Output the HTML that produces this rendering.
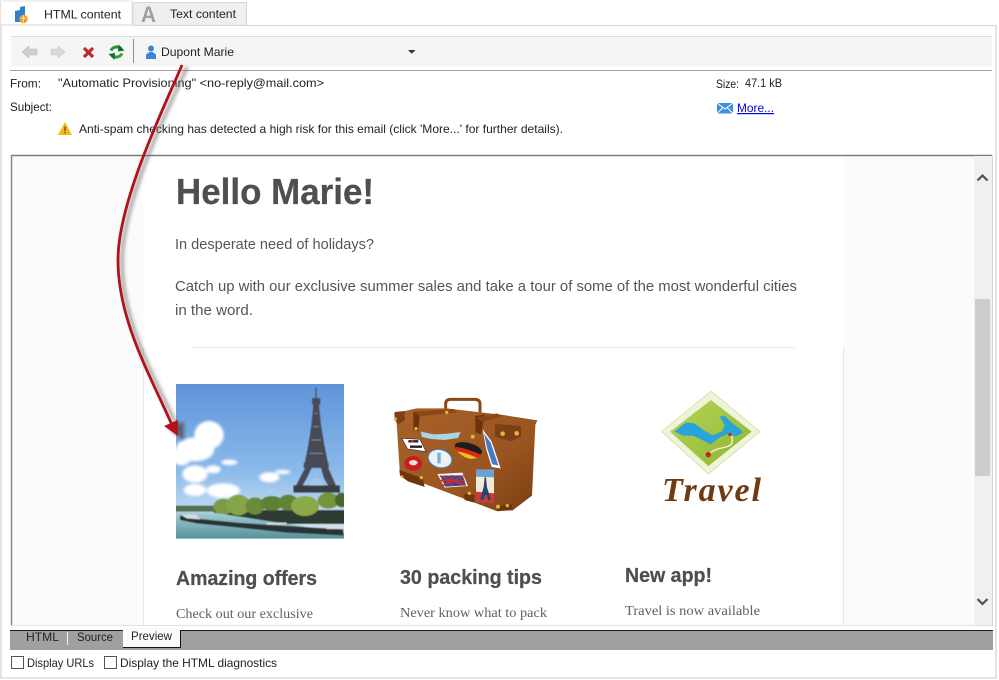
<!DOCTYPE html>
<html><head><meta charset="utf-8"><title>Email preview</title>
<style>
html,body{margin:0;padding:0;background:#fff;width:999px;height:680px;overflow:hidden}
svg{display:block}
text{font-family:"Liberation Sans",sans-serif;font-size:12px;fill:#222}
.b{font-weight:bold;fill:#4f4f4f;stroke:#4f4f4f;stroke-width:.25px}
.p{font-size:15px;fill:#555}
.s{font-family:"Liberation Serif",serif;font-size:14px;fill:#5f5f5f}
</style></head><body>
<svg width="999" height="680" viewBox="0 0 999 680" xmlns="http://www.w3.org/2000/svg">
<defs>
<filter id="sh" x="-50%" y="-10%" width="200%" height="120%"><feGaussianBlur stdDeviation="1.800"/></filter>
<filter id="soft" x="-5%" y="-5%" width="110%" height="110%"><feGaussianBlur stdDeviation="1.300"/></filter>
<filter id="soft2" x="-5%" y="-5%" width="110%" height="110%"><feGaussianBlur stdDeviation=".9"/></filter>
<filter id="bl2" x="-20%" y="-20%" width="140%" height="140%"><feGaussianBlur stdDeviation="4"/></filter>
<linearGradient id="sky" x1="0" y1="0" x2="0" y2="1"><stop offset="0" stop-color="#5e93d9"/><stop offset=".55" stop-color="#8ab9ea"/><stop offset=".85" stop-color="#c8dff2"/><stop offset="1" stop-color="#d8e8f2"/></linearGradient>
<linearGradient id="wat" x1="0" y1="0" x2="0" y2="1"><stop offset="0" stop-color="#a5ccd4"/><stop offset="1" stop-color="#4c8c92"/></linearGradient>
<linearGradient id="case" x1="0" y1="0" x2="1" y2="1"><stop offset="0" stop-color="#a9622a"/><stop offset=".6" stop-color="#9a5520"/><stop offset="1" stop-color="#7c3f14"/></linearGradient>
<linearGradient id="gr" x1="0" y1="0" x2="1" y2="1"><stop offset="0" stop-color="#b8d45a"/><stop offset="1" stop-color="#8db52e"/></linearGradient>
<clipPath id="ph"><rect x="108" y="42" width="504" height="464"/></clipPath>
</defs>

<!-- frame -->
<rect width="999" height="680" fill="#fff"/>
<path d="M1 25V678H996V25" fill="none" stroke="#dcdcdc" stroke-width="1.500"/>
<path d="M1 25H132M246 25.500H996" stroke="#d6d6d6" fill="none"/>
<path d="M.5 25V1H132V25" fill="none" stroke="#e4e4e4"/>
<rect x="133" y="2.500" width="113.500" height="23" fill="#efefef" stroke="#d6d6d6"/>

<!-- tab icons -->
<path d="M15 11l5-1V7l5-1v10H15z" fill="#2f7fc9"/><rect x="15" y="13" width="7" height="9" fill="#2f7fc9"/>
<circle cx="23.500" cy="19" r="4.200" fill="#ef9d26"/><path d="M21 18h5M23.500 15.500v7" stroke="#fbe0a8"/>
<text x="44" y="18.500" textLength="77" lengthAdjust="spacingAndGlyphs">HTML content</text>
<text x="141" y="22" style="font-size:22px;font-weight:bold;fill:#a0a0a0" textLength="15" lengthAdjust="spacingAndGlyphs">A</text>
<text x="170" y="18" textLength="66" lengthAdjust="spacingAndGlyphs">Text content</text>

<!-- toolbar -->
<rect x="11" y="37" width="981" height="29" fill="#f5f5f5"/>
<path d="M11 36.500H992" stroke="#dedede"/>
<path d="M10 70.500H992" stroke="#a3a3a3"/>
<path d="M133.500 39V63" stroke="#8d8d8d"/>
<path d="M22 52l7-6v3h8v6h-8v3z" fill="#cfcfcf" stroke="#bdbdbd" stroke-width=".6"/>
<path d="M65 52l-7-6v3h-7v6h7v3z" fill="#dadada" stroke="#c8c8c8" stroke-width=".6"/>
<path d="M84 48l9 9M93 48l-9 9" stroke="#c0282d" stroke-width="3.200"/>
<path d="M111 50.500a6.500 6.500 0 0 1 10-2" fill="none" stroke="#1f9a3a" stroke-width="3"/><path d="M118.500 44.500l6 6-6.500 1z" fill="#14702a"/>
<path d="M122 53.500a6.500 6.500 0 0 1-10 2" fill="none" stroke="#2ea043" stroke-width="3"/><path d="M114.500 60l-6-6 6.500-1z" fill="#14702a"/>
<circle cx="151" cy="48.500" r="3" fill="#3b86d0"/><path d="M149.500 52h3l3.500 2.500V59h-10v-4.500z" fill="#3b86d0"/>
<text x="161" y="56" textLength="73" lengthAdjust="spacingAndGlyphs">Dupont Marie</text>
<path d="M408 50h7.500l-3.750 3.800z" fill="#333"/>

<!-- headers -->
<text x="10" y="87.500" textLength="31" lengthAdjust="spacingAndGlyphs">From:</text>
<text x="58" y="87" textLength="266" lengthAdjust="spacingAndGlyphs">"Automatic Provisioning" &lt;no-reply@mail.com&gt;</text>
<text x="10" y="111" textLength="42" lengthAdjust="spacingAndGlyphs">Subject:</text>
<path d="M65 122l7 13H58z" fill="#f6b915"/><path d="M65 126.500v4.500M65 132v1.500" stroke="#5b4a10" stroke-width="1.300"/>
<text x="79" y="133" textLength="484" lengthAdjust="spacingAndGlyphs">Anti-spam checking has detected a high risk for this email (click 'More...' for further details).</text>
<text x="716" y="88" textLength="23" lengthAdjust="spacingAndGlyphs">Size:</text>
<text x="745" y="87" textLength="37" lengthAdjust="spacingAndGlyphs">47.1 kB</text>
<rect x="717" y="103" width="16" height="10.500" fill="#3d8fe0"/><path d="M717 103l8 6 8-6M717 113.500l6-6M733 113.500l-6-6" stroke="#fff" fill="none"/>
<text x="737" y="112" style="fill:#0000ee;text-decoration:underline" textLength="37" lengthAdjust="spacingAndGlyphs">More...</text>

<!-- preview pane -->
<rect x="11" y="155" width="981" height="470" fill="#fbfbfb"/>
<rect x="143" y="156" width="700" height="469" fill="#fff"/>
<path d="M11 155.500H992" stroke="#7d7d7d" stroke-width="1.600"/>
<path d="M11.500 155V625" stroke="#8a8a8a" stroke-width="1.500"/>
<path d="M192 347.500H795" stroke="#e8e8e8"/>
<path d="M143.500 348V625M843.500 348V625" stroke="#e6e6e6"/>
<path d="M11 625.500H993" stroke="#e2e2e2"/>
<!-- scrollbar -->
<rect x="974" y="156" width="18" height="469" fill="#f0f0f0"/>
<rect x="975" y="299" width="15" height="177" fill="#cdcdcd"/>
<path d="M977.500 180.500l5-5 5 5" fill="none" stroke="#505050" stroke-width="2.200"/>
<path d="M977.500 599l5 5 5-5" fill="none" stroke="#505050" stroke-width="2.200"/>
<path d="M992.500 155V625" stroke="#d8d8d8"/>

<!-- email text -->
<text class="b" x="176" y="204" style="font-size:36px" textLength="198" lengthAdjust="spacingAndGlyphs">Hello Marie!</text>
<text class="p" x="175" y="249" textLength="199" lengthAdjust="spacingAndGlyphs">In desperate need of holidays?</text>
<text class="p" x="175" y="291" textLength="622" lengthAdjust="spacingAndGlyphs">Catch up with our exclusive summer sales and take a tour of some of the most wonderful cities</text>
<text class="p" x="175" y="315" textLength="78" lengthAdjust="spacingAndGlyphs">in the word.</text>

<!-- eiffel photo -->
<g transform="translate(140 370) scale(.33333)"><g clip-path="url(#ph)"><g filter="url(#soft)">
<rect x="100" y="35" width="520" height="480" fill="url(#sky)"/>
<g fill="#fff" filter="url(#bl2)">
<ellipse cx="207" cy="195" rx="44" ry="42"/><ellipse cx="165" cy="238" rx="58" ry="36"/><ellipse cx="125" cy="258" rx="30" ry="28"/>
<ellipse cx="165" cy="312" rx="38" ry="26"/><ellipse cx="220" cy="298" rx="22" ry="12"/>
<ellipse cx="165" cy="360" rx="34" ry="18"/><ellipse cx="250" cy="362" rx="50" ry="22"/>
<ellipse cx="388" cy="322" rx="30" ry="15"/><ellipse cx="428" cy="306" rx="24" ry="6"/><ellipse cx="268" cy="277" rx="24" ry="8"/>
</g>
<!-- tower -->
<g fill="#474a55">
<rect x="526" y="52" width="4" height="32"/>
<rect x="516" y="84" width="25" height="20"/>
<path d="M520 104h17l6 60 10 60 12 60h-72l12-60 9-60z"/>
<rect x="491" y="278" width="75" height="16"/>
<path d="M495 294h20l-14 30-14 24h-20zM543 294h22l24 54h-24l-14-24z"/>
<rect x="460" y="346" width="140" height="22" fill="#3b3d44"/>
</g>
<path d="M524 130h9M520 170h17M514 210h29M508 250h41" stroke="#7f8fa8" stroke-width="3"/>
<path d="M510 346q19-46 38 0z" fill="#a6c8ea"/>
<!-- trees -->
<rect x="100" y="407" width="125" height="18" fill="#566f4d"/>
<rect x="222" y="420" width="395" height="42" fill="#2f3a33"/>
<g>
<ellipse cx="250" cy="410" rx="30" ry="24" fill="#7d9b45"/><ellipse cx="295" cy="405" rx="36" ry="31" fill="#86a548"/><ellipse cx="345" cy="408" rx="28" ry="26" fill="#6a8a3c"/><ellipse cx="395" cy="400" rx="34" ry="22" fill="#5d8236"/><ellipse cx="445" cy="398" rx="30" ry="24" fill="#5f8538"/><ellipse cx="495" cy="408" rx="42" ry="30" fill="#8aa948"/><ellipse cx="565" cy="392" rx="32" ry="24" fill="#75953e"/><ellipse cx="605" cy="390" rx="20" ry="22" fill="#46692e"/>
</g>
<!-- water -->
<path d="M100 428H222L620 490V515H100z" fill="url(#wat)"/>
<path d="M120 436l50 10 120 12 150 10 170 10v18l-170-8-150-16-120-12-50-10z" fill="#2c3336"/>
<path d="M122 434l45 0 15 14-42-3zM380 458h60v6h-60zM560 465h30v12h-30z" fill="#d8dde0"/>
</g></g></g>

<!-- suitcase -->
<g transform="translate(380 380) scale(.33333)"><g filter="url(#soft2)">
<path d="M197 105V72q0-14 15-14h72q16 0 16 14v38" fill="none" stroke="#8c4a18" stroke-width="9"/>
<path d="M42 100l68-15 90 0 170 20 102 16-6 14-10 212-58 44-48 2L60 284 50 130z" fill="url(#case)"/>
<path d="M345 132l78 6v32l-30 14-48-14zM44 96l30-3 0 28-20 12-10-14z" fill="#7c3f14"/>
<path d="M100 98l20-2-5 58-15-4zM285 108l30-5-12 60-16-5z" fill="#6e3610"/>
<path d="M100 95l120-8 12 10-112 12zM290 112l60-12 18 8-60 18z" fill="#8b4717"/>
<path d="M58 270l70 25 6 26-50-17-24-18zM252 340l32 6-2 22-28-8zM350 378l46-4 0 14-44 6z" fill="#6e3610"/>
<g fill="#e3b33b"><circle cx="368" cy="161" r="7"/><circle cx="410" cy="160" r="7"/><circle cx="278" cy="170" r="6"/><circle cx="46" cy="117" r="5"/><circle cx="108" cy="146" r="5"/><circle cx="124" cy="293" r="5"/><circle cx="268" cy="340" r="5"/><circle cx="354" cy="380" r="6"/><circle cx="382" cy="377" r="5"/><circle cx="200" cy="97" r="5"/><circle cx="66" cy="290" r="4"/></g>
<!-- stickers -->
<path d="M122 155l40 8 40-2 40-5-8 18-40 6-40-3-28-6z" fill="#a9d5e2"/>
<path d="M65 175l55 3 18 37-55-8z" fill="#fff" stroke="#333" stroke-width="2"/>
<path d="M85 184h30M90 200h36" stroke="#222" stroke-width="7"/><circle cx="97" cy="184" r="4" fill="#c8282d"/>
<ellipse cx="180" cy="236" rx="36" ry="27" transform="rotate(15 180 236)" fill="#eaf2f4" stroke="#3f82bd" stroke-width="3"/><path d="M172 218h10v32h-10z" fill="#7aaed2"/>
<ellipse cx="100" cy="250" rx="26" ry="22" fill="#c81e22"/><ellipse cx="100" cy="248" rx="13" ry="8" fill="#f3dcd0"/>
<ellipse cx="265" cy="207" rx="42" ry="18" transform="rotate(15 265 207)" fill="#1e1e1e"/>
<path d="M225 200q35 5 78 24l-10 9q-30-5-62-20z" fill="#d8281e"/><path d="M232 214q30 5 60 20l-18 3q-25-4-42-23z" fill="#edc020"/>
<path d="M172 282l75-4 17 40-70 5z" fill="#f4f4f4"/><path d="M180 287l68-1 10 30-62 4z" fill="#2a4d96"/><path d="M180 288l75 28M250 288l-65 30M215 285v34M182 302h72" stroke="#d8282e" stroke-width="5"/>
<path d="M308 148l27 37 27 80-27-4-17-56z" fill="#fff"/><path d="M312 160l20 28 23 68-18-3-16-50z" fill="#4779c9"/>
<path d="M288 268l54 4v97l-54-4z" fill="#f0ead8"/><path d="M288 335l54 5v30l-54-5z" fill="#c83a3a"/><path d="M288 268h54v24l-54-2z" fill="#6aa2cf"/><path d="M314 292l4 0 3 30 12 38h-8l-5-15h-5l-6 15h-8l10-40z" fill="#29436e"/>
</g></g>

<!-- travel logo -->
<g transform="translate(640 380) scale(.33333)">
<path d="M213 33L360 155 205 282 65 155z" fill="#eef4d8" stroke="#c9dc96" stroke-width="2"/>
<path d="M213 60L335 155 205 258 90 155z" fill="url(#gr)"/>
<path d="M103 155l35-28 25 3 30 22 25 14 28-12 8-20-15-24 15-3 20 20 28 22 8 8-22 12-22-8-25 10-30 22-22-12-30-14-30 0z" fill="#2aa3db"/>
<path d="M205 222q20-15 40-18t30-12q5-20-5-28" fill="none" stroke="#f4f7df" stroke-width="4"/>
<circle cx="205" cy="224" r="8" fill="#c81e28"/><circle cx="270" cy="164" r="5" fill="#c81e28"/>
</g>
<text x="662" y="501" style="font-family:'Liberation Serif',serif;font-style:italic;font-weight:bold;font-size:34px;fill:#6f3a12" textLength="99" lengthAdjust="spacing">Travel</text>

<!-- columns -->
<text class="b" x="176" y="585" style="font-size:20px" textLength="141" lengthAdjust="spacingAndGlyphs">Amazing offers</text>
<text class="b" x="400" y="584" style="font-size:20px" textLength="142" lengthAdjust="spacingAndGlyphs">30 packing tips</text>
<text class="b" x="625" y="582" style="font-size:20px" textLength="87" lengthAdjust="spacingAndGlyphs">New app!</text>
<text class="s" x="176" y="618" textLength="137" lengthAdjust="spacingAndGlyphs">Check out our exclusive</text>
<text class="s" x="400" y="617" textLength="147" lengthAdjust="spacingAndGlyphs">Never know what to pack</text>
<text class="s" x="625" y="615" textLength="135" lengthAdjust="spacingAndGlyphs">Travel is now available</text>

<!-- arrow -->
<path d="M187 67C170 105 122 200 122 262C122 322 154 377 178 428" fill="none" stroke="#666" stroke-width="3.500" opacity=".6" filter="url(#sh)"/>
<path d="M168 428L184 422L184 441z" fill="#444" opacity=".7" filter="url(#sh)"/>
<path d="M182 65C167 101 118 200 118 260C118 320 150 375 172 425" fill="none" stroke="#b3121c" stroke-width="2.800"/>
<path d="M164 426L178 420L178 436z" fill="#b3121c"/>

<!-- bottom tabs -->
<rect x="10" y="630" width="983" height="20" fill="#a0a0a0"/>
<path d="M10 630.500H123M180 630.500H993" stroke="#1c1c1c"/>
<path d="M67.500 632V645" stroke="#f0f0f0"/>
<text x="26" y="641" textLength="33" lengthAdjust="spacingAndGlyphs">HTML</text>
<text x="77" y="641" textLength="36" lengthAdjust="spacingAndGlyphs">Source</text>
<rect x="123" y="628" width="57" height="19" fill="#fafafa"/>
<path d="M123 647.500H180.500V630" fill="none" stroke="#111"/>
<text x="131" y="640" textLength="41" lengthAdjust="spacingAndGlyphs">Preview</text>

<!-- checkboxes -->
<rect x="11.500" y="656.500" width="12" height="12" fill="#fff" stroke="#555"/>
<text x="27" y="667" textLength="67" lengthAdjust="spacingAndGlyphs">Display URLs</text>
<rect x="104.500" y="656.500" width="12" height="12" fill="#fff" stroke="#555"/>
<text x="120" y="667" textLength="157" lengthAdjust="spacingAndGlyphs">Display the HTML diagnostics</text>
</svg>
</body></html>
